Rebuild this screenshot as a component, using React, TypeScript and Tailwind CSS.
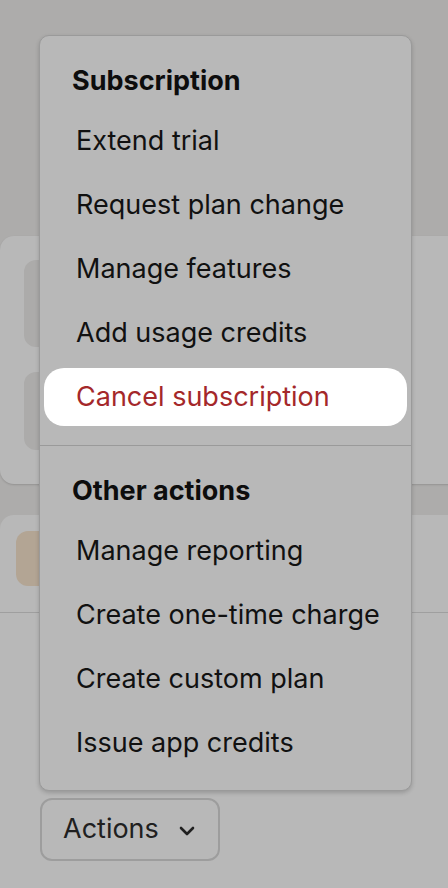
import React from "react";

const font = { fontFamily: "Inter, 'Noto Sans', 'Liberation Sans', sans-serif" };

function Item({ label, danger = false, active = false }: { label: string; danger?: boolean; active?: boolean }) {
  return (
    <div className="px-[4px] py-[3px]">
      <div
        className={
          "h-[58px] flex items-center pl-[32px] rounded-[20px] text-[27px] " +
          (active ? "bg-white " : "") +
          (danger ? "text-[#a4282a]" : "text-[#111111]")
        }
      >
        {label}
      </div>
    </div>
  );
}

function Heading({ label }: { label: string }) {
  return (
    <div className="pl-[32px] pt-[31px] h-[73px] text-[27px] leading-[28px] font-bold text-[#0d0d0d]">
      {label}
    </div>
  );
}

export default function App() {
  return (
    <div className="relative w-[448px] h-[888px] overflow-hidden bg-[#adacab]" style={font}>
      <div className="h-[236px]" />
      <div className="w-[480px] h-[248px] rounded-[14px] bg-[#b8b8b8] shadow-[0_1px_2px_rgba(0,0,0,0.15)] pt-[24px] px-[24px] flex flex-col gap-[25px]">
        <div className="w-[320px] h-[87px] rounded-[12px] bg-[#acabaa]" />
        <div className="w-[320px] h-[78px] rounded-[12px] bg-[#acabaa]" />
      </div>
      <div className="mt-[31px] w-[480px] h-[400px] rounded-t-[14px] bg-[#b8b8b8]">
        <div className="pt-[16px] px-[16px] h-[97px]">
          <div className="w-[300px] h-[55px] rounded-[12px] bg-[#b3a594]" />
        </div>
        <div className="h-px bg-[#9f9f9f]" />
        <div className="pt-[185px] pl-[40px]">
          <div className="w-[180px] h-[63px] border-2 border-[#9d9d9d] rounded-[12px] flex items-center pl-[21px] gap-[20px] text-[27px] text-[#202020]">
            <span>Actions</span>
            <svg width="16" height="12" viewBox="0 0 16 12" className="mt-[2px]">
              <path d="M2 3 L8 9 L14 3" fill="none" stroke="#202020" strokeWidth="2.6" strokeLinecap="round" strokeLinejoin="round" />
            </svg>
          </div>
        </div>
      </div>

      <div className="absolute left-[39px] top-[35px] w-[373px] rounded-[10px] border border-[#9a9a9a] bg-[#b8b8b8] shadow-[0_2px_4px_rgba(0,0,0,0.18)]">
        <div className="pb-[16px]">
          <Heading label="Subscription" />
          <Item label="Extend trial" />
          <Item label="Request plan change" />
          <Item label="Manage features" />
          <Item label="Add usage credits" />
          <Item label="Cancel subscription" danger active />
        </div>
        <div className="h-px bg-[#9a9a9a]" />
        <div className="pb-[15px]">
          <Heading label="Other actions" />
          <Item label="Manage reporting" />
          <Item label="Create one-time charge" />
          <Item label="Create custom plan" />
          <Item label="Issue app credits" />
        </div>
      </div>
    </div>
  );
}
